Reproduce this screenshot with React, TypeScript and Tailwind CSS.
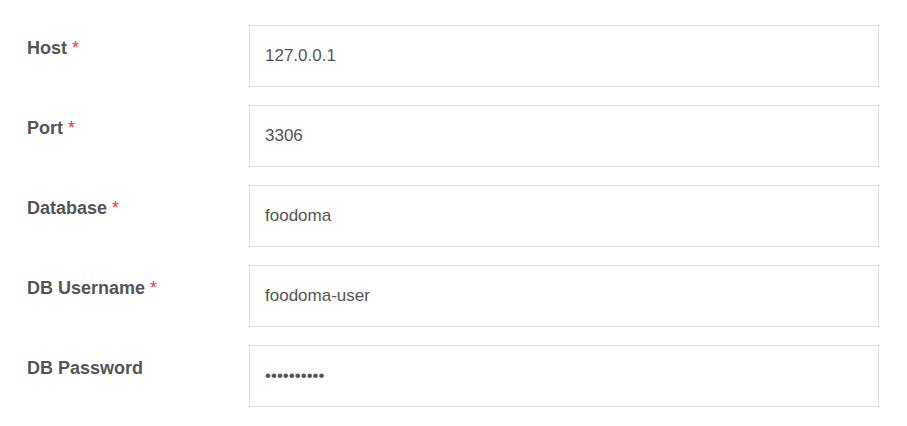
import { useState } from "react";

interface Field {
  label: string;
  value: string;
  required?: boolean;
  type?: string;
}

const fields: Field[] = [
  { label: "Host", value: "127.0.0.1", required: true },
  { label: "Port", value: "3306", required: true },
  { label: "Database", value: "foodoma", required: true },
  { label: "DB Username", value: "foodoma-user", required: true },
  { label: "DB Password", value: "secretpass", type: "password" },
];

function FieldRow({ field }: { field: Field }) {
  const [value, setValue] = useState(field.value);
  return (
    <div className="flex items-start">
      <label className="w-[222px] shrink-0 pt-[10px] text-[18px] leading-[27px] font-bold text-[#555]">
        {field.label}
        {field.required && (
          <span className="ml-[5px] font-normal text-[#e53935]">*</span>
        )}
      </label>
      <input
        type={field.type || "text"}
        value={value}
        onChange={(e) => setValue(e.target.value)}
        className="h-[62px] w-[630px] border border-[#dddddd] bg-white px-[15px] text-[17px] text-[#555] outline-none"
      />
    </div>
  );
}

export default function App() {
  return (
    <div
      className="min-h-[426px] bg-white pl-[27px] pt-[25px]"
      style={{ fontFamily: '"Liberation Sans", Arial, sans-serif' }}
    >
      <div className="flex flex-col gap-[18px]">
        {fields.map((f) => (
          <FieldRow key={f.label} field={f} />
        ))}
      </div>
    </div>
  );
}
